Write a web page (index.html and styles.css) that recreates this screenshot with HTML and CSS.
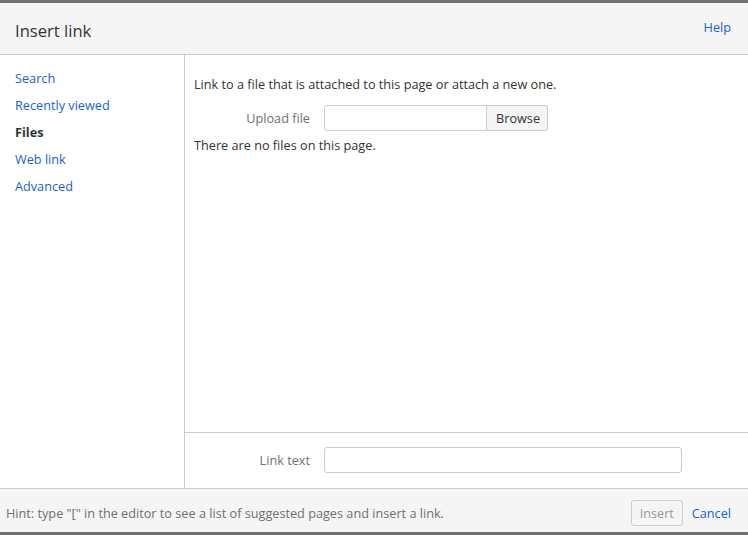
FILE: index.html
```html
<!DOCTYPE html>
<html lang="en">
<head>
  <meta charset="UTF-8" />
  <title>Insert link</title>
  <link rel="stylesheet" href="styles.css">
</head>
<body>
  <div class="dialog">
    <header class="dialog-header">
      <h2 class="dialog-title">Insert link</h2>
      <a class="help-link" href="#">Help</a>
    </header>

    <div class="dialog-body">
      <nav class="menu">
        <a class="menu-item" href="#">Search</a>
        <a class="menu-item" href="#">Recently viewed</a>
        <a class="menu-item selected" href="#">Files</a>
        <a class="menu-item" href="#">Web link</a>
        <a class="menu-item" href="#">Advanced</a>
      </nav>

      <div class="panel">
        <div class="panel-main">
          <p class="intro">Link to a file that is attached to this page or attach a new one.</p>
          <div class="field">
            <label class="field-label">Upload file</label>
            <div class="upload">
              <input class="text upload-input" type="text">
              <button class="button browse">Browse</button>
            </div>
          </div>
          <p class="empty">There are no files on this page.</p>
        </div>
        <div class="panel-footer">
          <div class="field">
            <label class="field-label">Link text</label>
            <input class="text link-text" type="text">
          </div>
        </div>
      </div>
    </div>

    <footer class="dialog-footer">
      <div class="hint">Hint: type "[" in the editor to see a list of suggested pages and insert a link.</div>
      <div class="actions">
        <button class="button insert" disabled>Insert</button>
        <a class="cancel" href="#">Cancel</a>
      </div>
    </footer>
  </div>
</body>
</html>
```

FILE: styles.css
```css
* {
  margin: 0;
  padding: 0;
  box-sizing: border-box;
}
body {
  font-family: "Open Sans", Arial, sans-serif;
  font-size: 12.7px;
  color: #333;
  background: #fff;
  width: 748px;
  height: 535px;
  overflow: hidden;
}
a {
  color: #1a5fd6;
  text-decoration: none;
}

.dialog {
  display: flex;
  flex-direction: column;
  height: 535px;
  border-top: 3px solid #707070;
  border-bottom: 3px solid #707070;
}

.dialog-header {
  display: flex;
  justify-content: space-between;
  height: 52px;
  background: #f5f5f5;
  border-bottom: 1px solid #ccc;
  padding: 0 17px 0 15px;
}
.dialog-title {
  font-size: 16.6px;
  font-weight: normal;
  color: #333;
  line-height: 52px;
  padding-top: 2px;
}
.help-link {
  line-height: 20px;
  padding-top: 14px;
}

.dialog-body {
  flex: 1;
  display: flex;
}
.menu {
  width: 185px;
  border-right: 1px solid #ccc;
  display: flex;
  flex-direction: column;
  padding: 14px 0 0 15px;
  gap: 9px;
}
.menu-item {
  line-height: 18px;
}
.menu-item.selected {
  color: #333;
  font-weight: bold;
}

.panel {
  flex: 1;
  display: flex;
  flex-direction: column;
}
.panel-main {
  flex: 1;
  padding: 20px 9px;
}
.intro {
  line-height: 18px;
  margin-bottom: 12px;
}
.field {
  display: flex;
  align-items: center;
}
.field-label {
  width: 130px;
  text-align: right;
  padding-right: 14px;
  color: #707070;
}
.upload {
  display: flex;
}
.text {
  height: 26px;
  border: 1px solid #ccc;
  border-radius: 3px;
  font: inherit;
  padding: 0 5px;
}
.upload-input {
  width: 163px;
  border-radius: 3px 0 0 3px;
}
.button {
  height: 26px;
  border: 1px solid #ccc;
  border-radius: 3px;
  background: #f5f5f5;
  font: inherit;
  color: #333;
  padding: 0 9px;
}
.browse {
  border-left: none;
  border-radius: 0 3px 3px 0;
  width: 61px;
}
.empty {
  line-height: 18px;
  margin-top: 5px;
}

.panel-footer {
  height: 56px;
  border-top: 1px solid #ccc;
  padding: 14px 9px 0;
}
.link-text {
  width: 358px;
}

.dialog-footer {
  height: 44px;
  display: flex;
  align-items: center;
  justify-content: space-between;
  background: #f5f5f5;
  border-top: 1px solid #ccc;
  padding: 0 17px 0 6px;
}
.hint {
  color: #707070;
  padding-top: 4px;
}
.actions {
  display: flex;
  align-items: center;
  gap: 9px;
  padding-top: 4px;
}
.insert {
  width: 52px;
  padding: 0;
  color: #999;
}
```
